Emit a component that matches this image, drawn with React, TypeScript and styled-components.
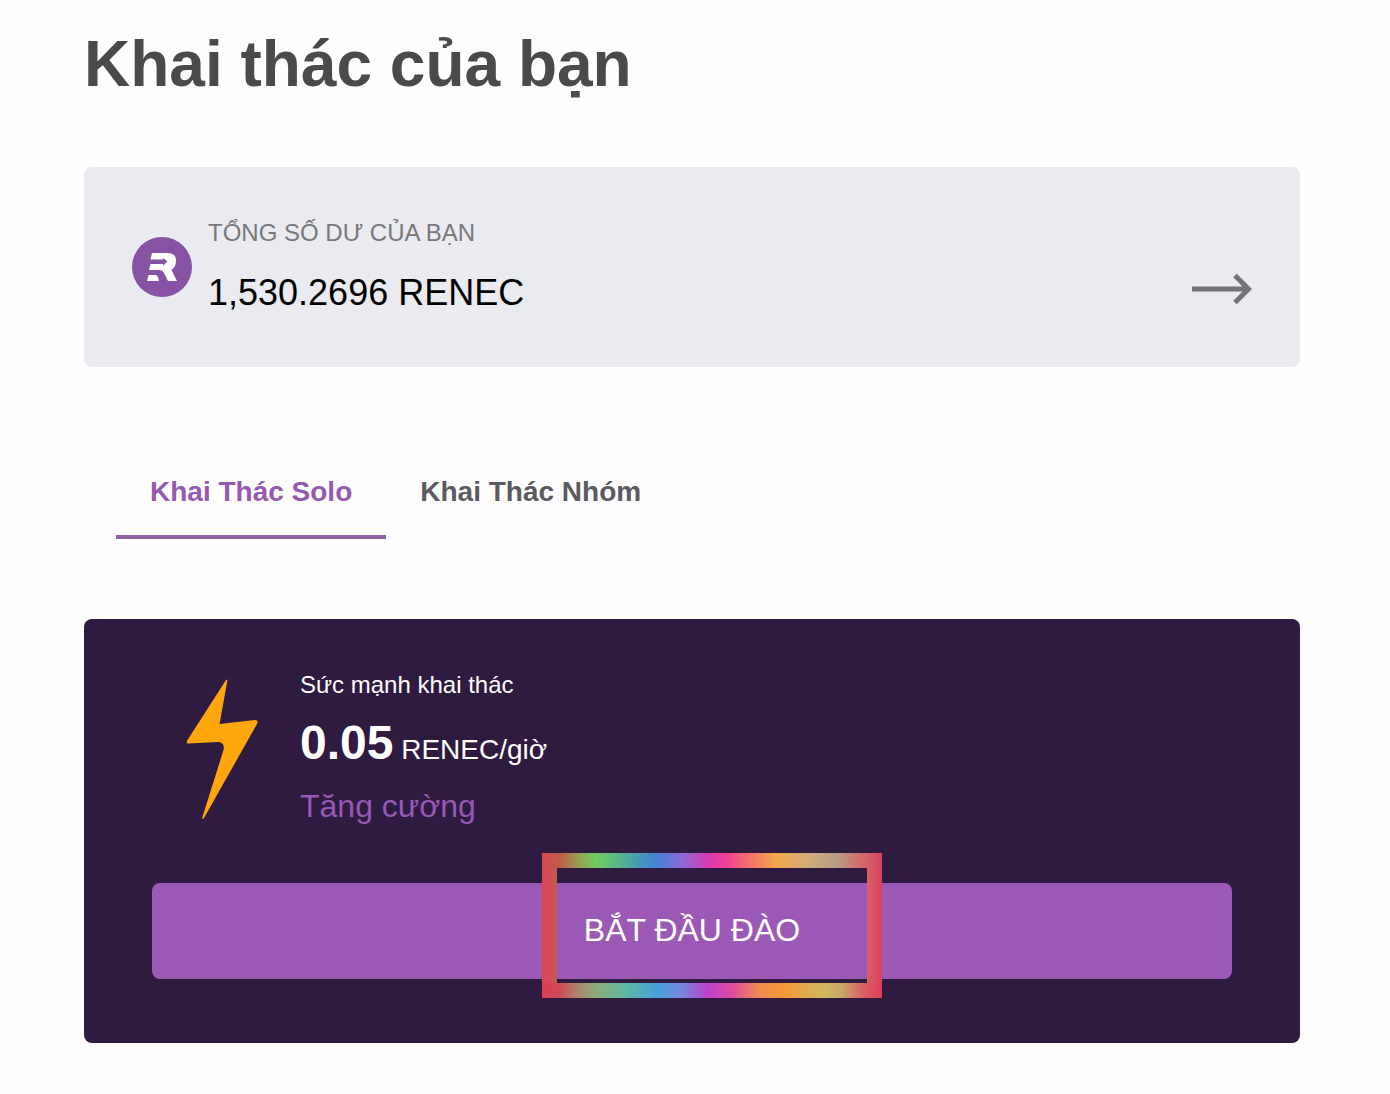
import React, { useState } from "react";
import styled, { createGlobalStyle } from "styled-components";

const GlobalStyle = createGlobalStyle`
  *, *::before, *::after { box-sizing: border-box; }
  body {
    margin: 0;
    background: #fefefe;
    font-family: "Liberation Sans", Arial, Helvetica, sans-serif;
  }
  button, a { font-family: inherit; }
`;

const Page = styled.main`
  padding: 28px 90px 48px 84px;
`;

const Title = styled.h1`
  margin: 0;
  font-size: 64px;
  line-height: 72px;
  font-weight: 700;
  color: #4a4a4b;
`;

const BalanceCard = styled.a`
  display: flex;
  align-items: center;
  gap: 16px;
  height: 200px;
  margin-top: 67px;
  padding: 0 48px;
  border-radius: 8px;
  background: #eaebf0;
  color: #000;
  text-decoration: none;
`;

const BalanceText = styled.div`
  display: flex;
  flex: 1;
  flex-direction: column;
  gap: 16px;
  padding-top: 4px;
`;

const BalanceLabel = styled.span`
  font-size: 24px;
  line-height: 32px;
  color: #78787b;
`;

const BalanceValue = styled.span`
  font-size: 36px;
  line-height: 56px;
`;

const ArrowIcon = styled.svg`
  width: 60px;
  height: 32px;
  margin-top: 44px;
`;

const TabList = styled.div`
  display: flex;
  margin-top: 76px;
  padding-left: 32px;
`;

const Tab = styled.button<{ $active: boolean }>`
  height: 96px;
  padding: 6px 34px 0;
  border: 0;
  border-bottom: 4px solid ${(p) => (p.$active ? "#9260a4" : "transparent")};
  background: none;
  font-size: 28px;
  line-height: 32px;
  font-weight: 700;
  color: ${(p) => (p.$active ? "#9659b0" : "#5b5a61")};
  cursor: pointer;
`;

const MiningCard = styled.section`
  margin-top: 80px;
  padding: 48px 68px 64px;
  border-radius: 8px;
  background: #2f1a40;
  color: #fff;
`;

const PowerRow = styled.div`
  display: flex;
  gap: 42px;
  padding-left: 34px;
`;

const BoltIcon = styled.svg`
  width: 72px;
  height: 142px;
  margin-top: 12px;
`;

const PowerText = styled.div`
  display: flex;
  flex-direction: column;
  align-items: flex-start;
`;

const PowerLabel = styled.span`
  font-size: 24px;
  line-height: 36px;
`;

const PowerValue = styled.p`
  margin: 12px 0 4px;
  font-size: 28px;
  line-height: 56px;
`;

const PowerNumber = styled.strong`
  font-size: 48px;
`;

const BoostLink = styled.a`
  font-size: 32px;
  line-height: 48px;
  color: #9659b4;
  text-decoration: none;
`;

const StartArea = styled.div`
  position: relative;
  margin-top: 53px;
`;

const StartButton = styled.button`
  display: block;
  width: 100%;
  height: 96px;
  padding: 0 0 2px;
  border: 0;
  border-radius: 8px;
  background: #9b58b5;
  color: #fff;
  font-size: 32px;
  line-height: 40px;
  cursor: pointer;
`;

const Highlight = styled.svg`
  position: absolute;
  top: -30px;
  left: calc(50% + 20px);
  width: 340px;
  height: 145px;
  transform: translateX(-50%);
  pointer-events: none;
`;

type Stop = [number, string];

const topStops: Stop[] = [
  [0, "#d44a54"], [5, "#c05a48"], [11, "#96a054"], [16, "#70cc60"], [22, "#58b986"],
  [28, "#449cb4"], [34, "#4680d8"], [41, "#8a6bd8"], [49, "#da38b0"], [54, "#ee4095"],
  [61, "#f5706c"], [69, "#f4a84c"], [79, "#cfac7c"], [87, "#b89986"], [94, "#d46a6a"],
  [100, "#d84560"],
];

const bottomStops: Stop[] = [
  [0, "#dc3c56"], [5, "#d04a55"], [11, "#a88a6c"], [16, "#8aad78"], [24, "#60b8a0"],
  [34, "#46a0d8"], [41, "#7685de"], [49, "#c040cc"], [56, "#de4c9e"], [64, "#f28a50"],
  [71, "#f69838"], [83, "#d0b860"], [88, "#c8a868"], [94, "#d86464"], [100, "#e03c58"],
];

const leftStops: Stop[] = [[0, "#d84752"], [60, "#d44c52"], [100, "#b86450"]];

const rightStops: Stop[] = [[0, "#d06468"], [40, "#dc5264"], [100, "#da405c"]];

function Gradient({ id, stops }: { id: string; stops: Stop[] }) {
  return (
    <linearGradient id={id}>
      {stops.map(([at, color]) => (
        <stop key={at} offset={`${at}%`} stopColor={color} />
      ))}
    </linearGradient>
  );
}

function RainbowFrame() {
  return (
    <Highlight viewBox="0 0 340 145" aria-hidden="true">
      <defs>
        <Gradient id="frame-top" stops={topStops} />
        <Gradient id="frame-bottom" stops={bottomStops} />
        <Gradient id="frame-left" stops={leftStops} />
        <Gradient id="frame-right" stops={rightStops} />
      </defs>
      <rect width="340" height="15" fill="url(#frame-top)" />
      <rect y="130" width="340" height="15" fill="url(#frame-bottom)" />
      <rect y="15" width="15" height="115" fill="url(#frame-left)" />
      <rect x="325" y="15" width="15" height="115" fill="url(#frame-right)" />
    </Highlight>
  );
}

function RenecLogo() {
  return (
    <svg width="60" height="60" viewBox="0 0 60 60" aria-hidden="true">
      <circle cx="30" cy="30" r="30" fill="#8752a3" />
      <path
        fill="#fff"
        d="M20 16H35Q44 16 44 23.500Q44 30 39.500 33L45 44H36L32 36Q30.500 33 27 33H17L18.500 27H31V28.500L35.500 24.500L31 21V22.500H18.500Z"
      />
      <path fill="#fff" d="M16.500 38H23.500Q26 38 27 44H15Z" />
    </svg>
  );
}

const tabs = ["Khai Thác Solo", "Khai Thác Nhóm"];

export default function App() {
  const [active, setActive] = useState(0);
  return (
    <>
      <GlobalStyle />
      <Page>
        <Title>Khai thác của bạn</Title>
        <BalanceCard href="#balance">
          <RenecLogo />
          <BalanceText>
            <BalanceLabel>TỔNG SỐ DƯ CỦA BẠN</BalanceLabel>
            <BalanceValue>1,530.2696 RENEC</BalanceValue>
          </BalanceText>
          <ArrowIcon viewBox="0 0 60 32" fill="none" stroke="#747476" strokeWidth="5" aria-hidden="true">
            <path d="M0 16H56M43 2.500L56.500 16L43 29.500" />
          </ArrowIcon>
        </BalanceCard>
        <TabList role="tablist">
          {tabs.map((name, i) => (
            <Tab
              key={name}
              type="button"
              role="tab"
              aria-selected={i === active}
              $active={i === active}
              onClick={() => setActive(i)}
            >
              {name}
            </Tab>
          ))}
        </TabList>
        <MiningCard>
          <PowerRow>
            <BoltIcon viewBox="0 0 72 142" aria-hidden="true">
              <path
                fill="#ffa70d"
                d="M40 1Q41.500 -0.500 41.300 2L33.500 45L69 41Q73 41 71 45L18 139Q16.500 141.500 16.300 138.500L37.500 71Q39 64 33 63L2 64.500Q0 64 1.200 61.500Z"
              />
            </BoltIcon>
            <PowerText>
              <PowerLabel>Sức mạnh khai thác</PowerLabel>
              <PowerValue>
                <PowerNumber>0.05</PowerNumber> RENEC/giờ
              </PowerValue>
              <BoostLink href="#boost">Tăng cường</BoostLink>
            </PowerText>
          </PowerRow>
          <StartArea>
            <StartButton type="button">BẮT ĐẦU ĐÀO</StartButton>
            <RainbowFrame />
          </StartArea>
        </MiningCard>
      </Page>
    </>
  );
}
